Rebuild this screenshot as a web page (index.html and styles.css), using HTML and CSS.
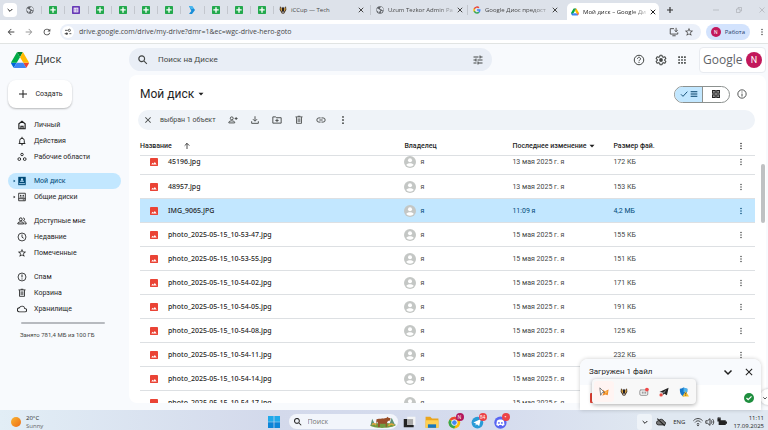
FILE: index.html
```html
<!DOCTYPE html>
<html lang="ru">
<head>
<meta charset="utf-8">
<title>Мой диск – Google Диск</title>
<link rel="stylesheet" href="styles.css">
</head>
<body>
<svg class="sprite" aria-hidden="true">
  <symbol id="close" viewBox="0 0 24 24"><path d="M19 6.4 17.6 5 12 10.6 6.4 5 5 6.4 10.6 12 5 17.6 6.4 19 12 13.4 17.6 19 19 17.6 13.4 12z"/></symbol>
  <symbol id="close-bold" viewBox="0 0 24 24"><path d="M3 3 21 21M21 3 3 21" fill="none" stroke="currentColor" stroke-width="4"/></symbol>
  <symbol id="chevron" viewBox="0 0 24 24"><path d="M5 9l7 7 7-7" fill="none" stroke="currentColor" stroke-width="3"/></symbol>
  <symbol id="globe" viewBox="0 0 24 24"><circle cx="12" cy="12" r="11" fill="#5f6368"/><path d="M3 8c4-1 5 3 8 3s2 4 0 5-1 5-3 5c-1-3-1-4-3-5s-3-3-3-6zM14 3c0 3-3 3-2 5s4 0 5 3 4 2 5 0-2-6-5-8zM17 15c-2 0-3 2-3 4l3 1 3-4z" fill="#dfe3ea"/></symbol>
  <symbol id="sheet" viewBox="0 0 24 24"><rect x="0" y="0" width="24" height="24" rx="2" fill="#23a94d"/><path d="M12 4v16M4 11.500h16" stroke="#fff" stroke-width="4"/></symbol>
  <symbol id="form" viewBox="0 0 24 24"><rect width="24" height="24" rx="2" fill="#673ab7"/><path d="M5 5h14v14H5z" fill="#fff"/><path d="M7 9h2m1.500 0H17M7 12h2m1.500 0H17M7 15.500h2m1.500 0H17" stroke="#673ab7" stroke-width="1.800"/></symbol>
  <symbol id="arrowmark" viewBox="0 0 24 24"><path d="M3 0h9l9 12-9 12H3l7-9z" fill="#188ed8"/><path d="M3 0h9l6 8-9 2z" fill="#49b8ef"/></symbol>
  <symbol id="beetle" viewBox="0 0 24 24"><path d="M3 1l6 6-4 2 7 14 7-14-4-2 6-6 1 10-7 12h-6L2 11z" fill="#44301e"/><path d="M4 4l5 4 1 9-5-5zM20 4l-5 4-1 9 5-5z" fill="#d09a35"/><path d="M9 2l3 4 3-4v12l-3 6-3-6z" fill="#211d22"/></symbol>
  <symbol id="g" viewBox="0 0 24 24"><path d="M22.500 12.300c0-.8-.1-1.500-.2-2.300H12v4.300h5.900a5 5 0 0 1-2.200 3.300v2.800h3.600c2-2 3.200-4.800 3.200-8.100z" fill="#4285f4"/><path d="M12 23c3 0 5.500-1 7.300-2.700l-3.600-2.700c-1 .7-2.200 1-3.700 1-2.900 0-5.300-1.900-6.200-4.500H2.200v2.800A11 11 0 0 0 12 23z" fill="#34a853"/><path d="M5.800 14.100a6.600 6.600 0 0 1 0-4.200V7.100H2.200a11 11 0 0 0 0 9.800z" fill="#fbbc05"/><path d="M12 5.400c1.600 0 3.100.6 4.200 1.600l3.200-3.100A11 11 0 0 0 2.200 7.100l3.600 2.800C6.700 7.300 9.100 5.400 12 5.400z" fill="#ea4335"/></symbol>
  <symbol id="drive" viewBox="0 0 87.300 78"><path d="m6.600 66.850 3.850 6.650c.8 1.400 1.950 2.500 3.300 3.300l13.750-23.800h-27.500c0 1.550.4 3.100 1.200 4.500z" fill="#0066da"/><path d="m43.650 25-13.750-23.800c-1.350.8-2.500 1.900-3.300 3.300l-25.400 44a9 9 0 0 0-1.200 4.500h27.500z" fill="#00ac47"/><path d="m73.550 76.800c1.350-.8 2.500-1.900 3.300-3.300l1.600-2.750 7.650-13.250c.8-1.400 1.200-2.950 1.200-4.500h-27.500l5.850 11.500z" fill="#ea4335"/><path d="m43.650 25 13.750-23.800c-1.350-.8-2.900-1.200-4.500-1.200h-18.500c-1.600 0-3.150.45-4.500 1.200z" fill="#00832d"/><path d="m59.800 53h-32.300l-13.750 23.800c1.350.8 2.900 1.200 4.500 1.200h50.800c1.600 0 3.150-.45 4.500-1.200z" fill="#3f86f4"/><path d="m73.400 26.500-12.700-22c-.8-1.400-1.950-2.500-3.300-3.300l-13.750 23.800 16.150 28h27.450c0-1.550-.4-3.100-1.200-4.500z" fill="#ffba00"/></symbol>
  <symbol id="back" viewBox="0 0 24 24"><path d="M20 11H7.800l5.600-5.600L12 4l-8 8 8 8 1.400-1.400L7.800 13H20z"/></symbol>
  <symbol id="reload" viewBox="0 0 24 24"><path d="M17.600 6.400A8 8 0 1 0 19.700 14h-2.100A6 6 0 1 1 12 6c1.700 0 3.100.7 4.200 1.800L13 11h7V4z"/></symbol>
  <symbol id="site" viewBox="0 0 24 24"><path d="M3 7h8M16 17h6M12 17H2" fill="none" stroke="currentColor" stroke-width="2.600"/><circle cx="16" cy="7" r="3.300" fill="none" stroke="currentColor" stroke-width="2.600"/><circle cx="8" cy="17" r="3.300" fill="currentColor"/></symbol>
  <symbol id="install" viewBox="0 0 24 24"><path d="M12 4H3v13h18v-4M8 21h8M17 2v9m-4-3.500 4 4 4-4" fill="none" stroke="currentColor" stroke-width="2.200"/></symbol>
  <symbol id="star" viewBox="0 0 24 24"><path d="m22 9.240-7.190-.62L12 2 9.190 8.630 2 9.240l5.460 4.730L5.820 21 12 17.270 18.180 21l-1.630-7.030zM12 15.400l-3.760 2.270 1-4.280-3.320-2.880 4.380-.38L12 6.100l1.710 4.040 4.380.38-3.320 2.880 1 4.280z"/></symbol>
  <symbol id="dots" viewBox="0 0 24 24"><circle cx="12" cy="4.500" r="2.200"/><circle cx="12" cy="12" r="2.200"/><circle cx="12" cy="19.500" r="2.200"/></symbol>
  <symbol id="plus" viewBox="0 0 24 24"><path d="M20 13h-7v7h-2v-7H4v-2h7V4h2v7h7z"/></symbol>
  <symbol id="search" viewBox="0 0 24 24"><path d="M20.500 19 15 13.500a7 7 0 1 0-1.500 1.500l5.500 5.500zM9.500 14a4.600 4.600 0 1 1 0-9.200 4.600 4.600 0 0 1 0 9.200z"/></symbol>
  <symbol id="tune" viewBox="0 0 24 24"><path d="M3 17v2h6v-2zM3 5v2h10V5zm10 16v-2h8v-2h-8v-2h-2v6zM7 9v2H3v2h4v2h2V9zm14 4v-2H11v2zm-6-4h2V7h4V5h-4V3h-2z"/></symbol>
  <symbol id="help" viewBox="0 0 24 24"><circle cx="12" cy="12" r="9.500" fill="none" stroke="currentColor" stroke-width="2"/><path d="M9 9.500a3 3 0 1 1 4.500 2.600c-1 .6-1.500 1.100-1.500 2.400" fill="none" stroke="currentColor" stroke-width="2"/><path d="M11 16h2v2h-2z"/></symbol>
  <symbol id="gear" viewBox="0 0 24 24"><path d="M10 2.500h4l.6 3 2.200 1.200 2.900-1 2 3.500-2.300 2v1.600l2.300 2-2 3.500-2.900-1-2.200 1.200-.6 3h-4l-.6-3-2.200-1.200-2.900 1-2-3.500 2.300-2v-1.600l-2.300-2 2-3.500 2.900 1 2.200-1.200z" fill="none" stroke="currentColor" stroke-width="2.200" stroke-linejoin="round"/><circle cx="12" cy="12" r="3.800"/></symbol>
  <symbol id="apps" viewBox="0 0 24 24"><path d="M3 3h4v4H3zm7 0h4v4h-4zm7 0h4v4h-4zM3 10h4v4H3zm7 0h4v4h-4zm7 0h4v4h-4zM3 17h4v4H3zm7 0h4v4h-4zm7 0h4v4h-4z"/></symbol>
  <symbol id="home" viewBox="0 0 24 24"><path d="M12 3 4.500 9v12h15V9zM9.500 21v-6h5v6" fill="none" stroke="currentColor" stroke-width="2.800"/></symbol>
  <symbol id="bell" viewBox="0 0 24 24"><path d="M4 18h16M6.500 18v-7a5.500 5.500 0 0 1 11 0v7M12 2v4M10 21h4" fill="none" stroke="currentColor" stroke-width="2.300"/></symbol>
  <symbol id="spaces" viewBox="0 0 24 24"><g fill="none" stroke="currentColor" stroke-width="2.200"><circle cx="12" cy="6" r="3"/><circle cx="5.500" cy="17" r="3.300"/><circle cx="18.500" cy="17" r="3.300"/></g></symbol>
  <symbol id="mydrive" viewBox="0 0 24 24"><path d="M3 2h18v20H3z"/><path d="M5 17.500h14v2H5z" fill="#c2e7ff"/><circle cx="12" cy="8" r="2.500" fill="#c2e7ff"/><path d="M7 14a5 4 0 0 1 10 0z" fill="#c2e7ff"/></symbol>
  <symbol id="shareddrive" viewBox="0 0 24 24"><path d="M4 3h16v18H4zM4 16h16" fill="none" stroke="currentColor" stroke-width="2"/><circle cx="9" cy="8.500" r="1.700"/><circle cx="15" cy="8.500" r="1.700"/><path d="M6 13a3 2.500 0 0 1 6 0 3 2.500 0 0 1 6 0zM14 18h4v1.500h-4z"/></symbol>
  <symbol id="people" viewBox="0 0 24 24"><g fill="none" stroke="currentColor" stroke-width="2.300"><circle cx="9" cy="8" r="3.500"/><path d="M2 19v-2c0-4 14-4 14 0v2zM15 4.500c4 0 4 7 0 7M17 14c3 0 5 1 5 3v2h-4"/></g></symbol>
  <symbol id="clock" viewBox="0 0 24 24"><path d="M12 6v6.500l4 2.500" fill="none" stroke="currentColor" stroke-width="2"/><circle cx="12" cy="12" r="9.500" fill="none" stroke="currentColor" stroke-width="2"/></symbol>
  <symbol id="spam" viewBox="0 0 24 24"><path d="M12 6v7M12 15.500v2.500" fill="none" stroke="currentColor" stroke-width="2.300"/><circle cx="12" cy="12" r="9.500" fill="none" stroke="currentColor" stroke-width="2"/></symbol>
  <symbol id="info" viewBox="0 0 24 24"><path d="M12 11v7M12 6v2.500" fill="none" stroke="currentColor" stroke-width="2.300"/><circle cx="12" cy="12" r="10" fill="none" stroke="currentColor" stroke-width="2.200"/></symbol>
  <symbol id="trash" viewBox="0 0 24 24"><path d="M3.500 4.500h17M9 3h6M6 5v15h12V5M10 8v9M14 8v9" fill="none" stroke="currentColor" stroke-width="2"/></symbol>
  <symbol id="cloud" viewBox="0 0 24 24"><path d="M19.400 10A7.500 7.500 0 0 0 5.400 8 6 6 0 0 0 6 20h13a5 5 0 0 0 .4-10zM19 18H6a4 4 0 0 1 0-8h.7a5.500 5.500 0 0 1 10.800 2H19a3 3 0 0 1 0 6z"/></symbol>
  <symbol id="adduser" viewBox="0 0 24 24"><g fill="none" stroke="currentColor" stroke-width="2.200"><circle cx="9" cy="8" r="3.500"/><path d="M2 19v-2c0-4 14-4 14 0v2zM19.500 5v7M16 8.500h7"/></g></symbol>
  <symbol id="download" viewBox="0 0 24 24"><path d="M12 3v11M7 10l5 5 5-5M4 15v5h16v-5" fill="none" stroke="currentColor" stroke-width="2.200"/></symbol>
  <symbol id="move" viewBox="0 0 24 24"><path d="M2 4.500h7l2 2h11v13H2zM8 13h8M12 9v8" fill="none" stroke="currentColor" stroke-width="2.200"/></symbol>
  <symbol id="link" viewBox="0 0 24 24"><path d="M11 7H7a5 5 0 0 0 0 10h4M13 7h4a5 5 0 0 1 0 10h-4M8 12h8" fill="none" stroke="currentColor" stroke-width="2.200"/></symbol>
  <symbol id="up" viewBox="0 0 24 24"><path d="M12 21V4M5 11l7-7 7 7" fill="none" stroke="currentColor" stroke-width="2.400"/></symbol>
  <symbol id="caret" viewBox="0 0 24 24"><path d="M2 7h20L12 18z"/></symbol>
  <symbol id="triangle" viewBox="0 0 24 24"><path d="M5 2v20l14-10z"/></symbol>
  <symbol id="check" viewBox="0 0 24 24"><path d="M3 13l6 6L22 5" fill="none" stroke="currentColor" stroke-width="2.600"/></symbol>
  <symbol id="list" viewBox="0 0 24 24"><path d="M2 5h20M2 12h20M2 19h20" stroke="currentColor" stroke-width="3.200"/></symbol>
  <symbol id="grid" viewBox="0 0 24 24"><path d="M4 4h6v6H4zm10 0h6v6h-6zM4 14h6v6H4zm10 0h6v6h-6z" fill="none" stroke="currentColor" stroke-width="3"/></symbol>
  <symbol id="image" viewBox="0 0 24 24"><rect width="24" height="24" rx="2.500" fill="#ea4335"/><path d="M4 19.500l3.500-5 3 3 4-5.500 5.500 7.500z" fill="#fff"/></symbol>
  <symbol id="person" viewBox="0 0 24 24"><circle cx="12" cy="12" r="12" fill="#c4c7c5"/><circle cx="12" cy="8.700" r="4" fill="#fff"/><path d="M4.500 18c2-5 13-5 15 0a9.500 9.500 0 0 1-15 0z" fill="#fff"/></symbol>
</svg>

<header class="browser">
  <div class="tabs">
    <button class="tab-search" aria-label="Поиск вкладок"><svg class="i8"><use href="#chevron"/></svg></button>
    <div class="pinned">
      <span><svg class="i8"><use href="#globe"/></svg></span>
      <span><svg class="i8"><use href="#sheet"/></svg></span>
      <span><svg class="i8"><use href="#form"/></svg></span>
      <span><svg class="i8"><use href="#sheet"/></svg></span>
      <span><svg class="i8"><use href="#sheet"/></svg></span>
      <span><svg class="i8"><use href="#sheet"/></svg></span>
      <span><svg class="i8"><use href="#sheet"/></svg></span>
      <span><svg class="i8"><use href="#arrowmark"/></svg></span>
      <span><svg class="i8"><use href="#sheet"/></svg></span>
      <span><svg class="i8"><use href="#sheet"/></svg></span>
      <span><svg class="i8"><use href="#sheet"/></svg></span>
    </div>
    <div class="tab"><svg class="i8"><use href="#beetle"/></svg><span>iCCup — Tech</span><button aria-label="Закрыть"><svg class="i6"><use href="#close-bold"/></svg></button></div>
    <div class="tab"><svg class="i8"><use href="#globe"/></svg><span class="fade">Uzum Tezkor Admin Pa</span><button aria-label="Закрыть"><svg class="i6"><use href="#close-bold"/></svg></button></div>
    <div class="tab last"><svg class="i8"><use href="#g"/></svg><span class="fade">Google Диос предост</span><button aria-label="Закрыть"><svg class="i6"><use href="#close-bold"/></svg></button></div>
    <div class="tab active"><svg class="i8"><use href="#drive"/></svg><span class="fade">Мой диск – Google Ди</span><button aria-label="Закрыть"><svg class="i6"><use href="#close-bold"/></svg></button></div>
    <button class="new-tab" aria-label="Новая вкладка"><svg class="i8" viewBox="0 0 24 24"><path d="M12 3v18M3 12h18" stroke="#333" stroke-width="3.500"/></svg></button>
    <div class="window-controls">
      <svg class="i6" viewBox="0 0 12 12"><path d="M0 6h12"/></svg>
      <svg class="i6" viewBox="0 0 12 12"><path d="M1 4h7v7H1zM4 4V1h7v7H8"/></svg>
      <svg class="i6" viewBox="0 0 12 12"><path d="M1 1l10 10M11 1 1 11"/></svg>
    </div>
  </div>
  <div class="address-row">
    <button aria-label="Назад"><svg class="i10"><use href="#back"/></svg></button>
    <button class="forward" aria-label="Вперёд"><svg class="i10"><use href="#back"/></svg></button>
    <button aria-label="Обновить"><svg class="i10"><use href="#reload"/></svg></button>
    <div class="address">
      <span class="site-info"><svg class="i8"><use href="#site"/></svg></span>
      <input type="text" aria-label="Адрес" value="drive.google.com/drive/my-drive?dmr=1&amp;ec=wgc-drive-hero-goto">
      <svg class="i10"><use href="#install"/></svg>
      <svg class="i10"><use href="#star"/></svg>
    </div>
    <button class="profile"><span class="avatar small">N</span>Работа</button>
    <button aria-label="Меню"><svg class="i8"><use href="#dots"/></svg></button>
  </div>
</header>

<div class="drive">
  <header class="top">
    <a class="brand" href="#"><svg><use href="#drive"/></svg>Диск</a>
    <label class="search"><svg class="i12"><use href="#search"/></svg><input type="text" placeholder="Поиск на Диске"><svg class="i12"><use href="#tune"/></svg></label>
    <div class="top-actions">
      <button aria-label="Справка"><svg class="i12"><use href="#help"/></svg></button>
      <button aria-label="Настройки"><svg class="i12"><use href="#gear"/></svg></button>
      <button aria-label="Приложения"><svg class="i10"><use href="#apps"/></svg></button>
      <div class="account"><span>Google</span><span class="avatar">N</span></div>
    </div>
  </header>

  <nav class="sidebar">
    <button class="create"><svg class="i12"><use href="#plus"/></svg>Создать</button>
    <ul>
      <li><a href="#"><span class="arrow"></span><svg class="i10"><use href="#home"/></svg>Личный</a></li>
      <li><a href="#"><span class="arrow"></span><svg class="i10"><use href="#bell"/></svg>Действия</a></li>
      <li><a href="#"><span class="arrow"></span><svg class="i10"><use href="#spaces"/></svg>Рабочие области</a></li>
    </ul>
    <ul>
      <li><a class="current" href="#"><span class="arrow"><svg><use href="#triangle"/></svg></span><svg class="i10"><use href="#mydrive"/></svg>Мой диск</a></li>
      <li><a href="#"><span class="arrow"><svg><use href="#triangle"/></svg></span><svg class="i10"><use href="#shareddrive"/></svg>Общие диски</a></li>
    </ul>
    <ul>
      <li><a href="#"><span class="arrow"></span><svg class="i10"><use href="#people"/></svg>Доступные мне</a></li>
      <li><a href="#"><span class="arrow"></span><svg class="i10"><use href="#clock"/></svg>Недавние</a></li>
      <li><a href="#"><span class="arrow"></span><svg class="i10"><use href="#star"/></svg>Помеченные</a></li>
    </ul>
    <ul>
      <li><a href="#"><span class="arrow"></span><svg class="i10"><use href="#spam"/></svg>Спам</a></li>
      <li><a href="#"><span class="arrow"></span><svg class="i10"><use href="#trash"/></svg>Корзина</a></li>
      <li><a href="#"><span class="arrow"></span><svg class="i10"><use href="#cloud"/></svg>Хранилище</a></li>
    </ul>
    <div class="quota"></div>
    <p>Занято 781,4 МБ из 100 ГБ</p>
  </nav>

  <main>
    <div class="title-row">
      <h1>Мой диск<svg class="i6"><use href="#caret"/></svg></h1>
      <div class="view-switch">
        <button class="on" aria-label="Список"><svg class="i8"><use href="#check"/></svg><svg class="i8"><use href="#list"/></svg></button>
        <button aria-label="Сетка"><svg class="i10"><use href="#grid"/></svg></button>
      </div>
      <button aria-label="Сведения"><svg class="i10"><use href="#info"/></svg></button>
    </div>
    <div class="selection">
      <button aria-label="Снять выделение"><svg class="i10"><use href="#close"/></svg></button>
      <span>выбран 1 объект</span>
      <button aria-label="Поделиться"><svg class="i10"><use href="#adduser"/></svg></button>
      <button aria-label="Скачать"><svg class="i10"><use href="#download"/></svg></button>
      <button aria-label="Переместить"><svg class="i10"><use href="#move"/></svg></button>
      <button aria-label="Удалить"><svg class="i10"><use href="#trash"/></svg></button>
      <button aria-label="Ссылка"><svg class="i10"><use href="#link"/></svg></button>
      <button aria-label="Ещё"><svg class="i10"><use href="#dots"/></svg></button>
    </div>
    <table>
      <thead><tr><th class="name">Название<svg class="i8"><use href="#up"/></svg></th><th class="owner">Владелец</th><th class="date">Последнее изменение<svg class="i6"><use href="#caret"/></svg></th><th>Размер фай.</th><th class="more"><svg class="i8"><use href="#dots"/></svg></th></tr></thead>
      <tbody>
        <tr class="scrolled"><td><svg><use href="#image"/></svg>45196.jpg</td><td><svg><use href="#person"/></svg>я</td><td>13 мая 2025 г. я</td><td>172 КБ</td><td><svg><use href="#dots"/></svg></td></tr>
        <tr><td><svg><use href="#image"/></svg>48957.jpg</td><td><svg><use href="#person"/></svg>я</td><td>13 мая 2025 г. я</td><td>153 КБ</td><td><svg><use href="#dots"/></svg></td></tr>
        <tr class="selected"><td><svg><use href="#image"/></svg>IMG_9065.JPG</td><td><svg><use href="#person"/></svg>я</td><td>11:09 я</td><td>4,2 МБ</td><td><svg><use href="#dots"/></svg></td></tr>
        <tr><td><svg><use href="#image"/></svg>photo_2025-05-15_10-53-47.jpg</td><td><svg><use href="#person"/></svg>я</td><td>15 мая 2025 г. я</td><td>155 КБ</td><td><svg><use href="#dots"/></svg></td></tr>
        <tr><td><svg><use href="#image"/></svg>photo_2025-05-15_10-53-55.jpg</td><td><svg><use href="#person"/></svg>я</td><td>15 мая 2025 г. я</td><td>151 КБ</td><td><svg><use href="#dots"/></svg></td></tr>
        <tr><td><svg><use href="#image"/></svg>photo_2025-05-15_10-54-02.jpg</td><td><svg><use href="#person"/></svg>я</td><td>15 мая 2025 г. я</td><td>171 КБ</td><td><svg><use href="#dots"/></svg></td></tr>
        <tr><td><svg><use href="#image"/></svg>photo_2025-05-15_10-54-05.jpg</td><td><svg><use href="#person"/></svg>я</td><td>15 мая 2025 г. я</td><td>191 КБ</td><td><svg><use href="#dots"/></svg></td></tr>
        <tr><td><svg><use href="#image"/></svg>photo_2025-05-15_10-54-08.jpg</td><td><svg><use href="#person"/></svg>я</td><td>15 мая 2025 г. я</td><td>125 КБ</td><td><svg><use href="#dots"/></svg></td></tr>
        <tr><td><svg><use href="#image"/></svg>photo_2025-05-15_10-54-11.jpg</td><td><svg><use href="#person"/></svg>я</td><td>15 мая 2025 г. я</td><td>232 КБ</td><td><svg><use href="#dots"/></svg></td></tr>
        <tr><td><svg><use href="#image"/></svg>photo_2025-05-15_10-54-14.jpg</td><td><svg><use href="#person"/></svg>я</td><td>15 мая 2025 г. я</td><td></td><td></td></tr>
        <tr><td><svg><use href="#image"/></svg>photo_2025-05-15_10-54-17.jpg</td><td><svg><use href="#person"/></svg>я</td><td>15 мая 2025 г. я</td><td></td><td></td></tr>
      </tbody>
    </table>
    <div class="scrollbar"></div>
  </main>

  <div class="side-toggle"><svg class="i6"><use href="#chevron"/></svg></div>
  <section class="toast">
    <header><h2>Загружен 1 файл</h2><button aria-label="Свернуть"><svg class="i12"><use href="#chevron"/></svg></button><button aria-label="Закрыть"><svg class="i12"><use href="#close"/></svg></button></header>
    <div class="upload"><svg class="i10"><use href="#image"/></svg><svg class="i10" viewBox="0 0 24 24"><circle cx="12" cy="12" r="12" fill="#1e8e3e"/><path d="M6 12l4 4 8-8" fill="none" stroke="#fff" stroke-width="3"/></svg></div>
  </section>
</div>

<div class="tray-popup">
  <span class="hover"><svg class="i10" viewBox="0 0 24 24"><path d="M9 6l5 4 9-4-2 14-6-2-7 3 3-8z" fill="#f08a24"/><path d="M14 10l7 1-5 6z" fill="#ffc05c"/><path d="M2 2l11 11H8l-4 7z" fill="#fff" stroke="#444" stroke-width="1.500"/></svg></span>
  <span><svg class="i8"><use href="#beetle"/></svg></span>
  <span><svg class="i10" viewBox="0 0 24 24"><path d="M4 7h14a3 3 0 0 1 3 3v7a3 3 0 0 1-3 3H5a3 3 0 0 1-3-3v-7a3 3 0 0 1 3-3z" fill="#f4f4f4" stroke="#777" stroke-width="1.800"/><path d="M8 11v5M12 11v5M16 11v5" stroke="#777" stroke-width="2"/><circle cx="19" cy="6" r="4.500" fill="#f04848"/></svg></span>
  <span><svg class="i10" viewBox="0 0 24 24"><path d="M1 12 23 2l-4 18-6-4-4 3 0-6z" fill="#222"/><path d="M9 13l9-7-6 10z" fill="#777"/><circle cx="5" cy="19" r="4" fill="#e84b43"/></svg></span>
  <span><svg class="i10" viewBox="0 0 24 24"><path d="M2 4c5 0 7-2 9-3 2 1 4 3 9 3 0 10-2 15-9 19C4 19 2 14 2 4z" fill="#1777c8"/><path d="M11 1c2 1 4 3 9 3v8h-9z" fill="#4db4ee"/><path d="M16 10l8 13H8z" fill="#fbc02d"/><path d="M16 14v4m0 1.500V21" stroke="#333" stroke-width="1.800"/></svg></span>
</div>

<footer class="taskbar">
  <div class="weather"><span class="sun"></span><div>20°C<br><small>Sunny</small></div></div>
  <div class="apps">
    <button aria-label="Пуск"><svg class="i12" viewBox="0 0 24 24"><path d="M0 0h11.300v11.300H0zM12.700 0H24v11.300H12.700z" fill="#20a9ea"/><path d="M0 12.700h11.300V24H0zM12.700 12.700H24V24H12.700z" fill="#0c85d8"/></svg></button>
    <label class="task-search"><svg class="i10"><use href="#search"/></svg><input type="text" placeholder="Поиск">
      <svg class="scene" viewBox="0 0 48 24"><path d="M0 19c8-5 35-6 48-1-5 7-42 8-48 1z" fill="#719a3f"/><path d="M1 19l3-12 5 10M36 17l4-12 6 13" fill="#5d9275"/><path d="M12 8c5-2 16-1 19-3l1-2 2 2 4 1-1 4-4 1-2 4v7h-2v-6H18v6h-3v-7l-2-3-2 6z" fill="#994e29"/><path d="M4 18c2-3 6-2 7 1M34 20c3-4 8-4 10-1" stroke="#dfa73a" stroke-width="3" fill="none"/></svg>
    </label>
    <button aria-label="Представление задач"><svg class="i14" viewBox="0 0 24 24"><path d="M9 3h14v14H9z" fill="#f3f4f5"/><path d="M3 7h6v10h11v4H3z" fill="#222"/><path d="M9 7h10v10H9z" fill="#aaa"/></svg></button>
    <button aria-label="Проводник"><svg class="i14" viewBox="0 0 24 24"><path d="M1 3h8l3 3h11v16H1z" fill="#eaa51d"/><path d="M1 9h22v13H1z" fill="#ffd052"/><path d="M5 16h14v6H5z" fill="#1878be"/></svg></button>
    <button aria-label="Chrome"><svg class="i14" viewBox="0 0 24 24"><circle cx="11" cy="13" r="10" fill="#fbbc05"/><path d="M2.300 8A10 10 0 0 1 20 9l-9 .5z" fill="#ea4335"/><path d="M2.300 8A10 10 0 0 0 10.500 23l4-8z" fill="#34a853"/><circle cx="11" cy="13" r="4.800" fill="#4285f4" stroke="#fff" stroke-width="1.500"/></svg><span class="badge plum">N</span></button>
    <button aria-label="Telegram"><svg class="i14" viewBox="0 0 24 24"><circle cx="11" cy="13" r="10" fill="#299bd7"/><path d="M4 13l13-6-3 12-4-3-2 2v-4z" fill="#fff"/></svg><span class="badge">84</span></button>
    <button aria-label="Discord"><svg class="i14" viewBox="0 0 24 24"><circle cx="11" cy="13" r="10.500" fill="#5865f2"/><path d="M5 10c3-3 9-3 12 0l1 7-4 2-1-2H9l-1 2-4-2z" fill="#fff"/><circle cx="8.500" cy="13.500" r="1.500" fill="#5865f2"/><circle cx="13.500" cy="13.500" r="1.500" fill="#5865f2"/></svg><span class="badge">•</span></button>
  </div>
  <div class="tray">
    <span class="tray-open"><svg class="i8"><use href="#chevron"/></svg></span>
    <svg class="i10" viewBox="0 0 24 24"><path d="M6 19a5 5 0 0 1 0-10 7 7 0 0 1 13 2 4 4 0 0 1 0 8z" fill="#777" stroke="#222" stroke-width="2"/><path d="M3 4l18 17" stroke="#222" stroke-width="2.500"/></svg>
    <span class="lang">ENG</span>
    <svg class="i10" viewBox="0 0 24 24"><path d="M1 9c6-7 16-7 22 0M5 13c4-5 10-5 14 0M9 17c2-2 4-2 6 0" fill="none" stroke="#222" stroke-width="2"/><circle cx="12" cy="20" r="2"/></svg>
    <svg class="i10" viewBox="0 0 24 24"><path d="M2 9h4l6-5v16l-6-5H2zM15 8c2 2 2 6 0 8M18 5c4 4 4 10 0 14" fill="none" stroke="#222" stroke-width="2"/></svg>
    <svg class="i10" viewBox="0 0 24 24"><path d="M4 8h17v11H4zM21 11h3v5h-3zM1 3h8v8H1z" fill="#222"/><path d="M3 0v4m4-4v4" stroke="#222" stroke-width="2"/></svg>
    <div class="clock">11:11<br>17.09.2025</div>
  </div>
</footer>
</body>
</html>
```
FILE: styles.css
```css
* { box-sizing: border-box; }
body {
  margin: 0;
  height: 100vh;
  display: flex;
  flex-direction: column;
  overflow: hidden;
  font: 7px/10px Roboto, "Noto Sans", sans-serif;
  color: #1f1f1f;
  background: #f8fafd;
}
button, input { font: inherit; color: inherit; border: 0; padding: 0; background: none; outline: 0; }
button { display: flex; align-items: center; justify-content: center; }
a { color: inherit; text-decoration: none; }
ul { list-style: none; margin: 0 0 8px; padding: 0; }
h1, h2, p { margin: 0; font-weight: 400; }
svg { fill: currentColor; flex: none; }
.sprite { position: absolute; width: 0; height: 0; }
.i6 { width: 6px; height: 6px; }
.i8 { width: 8px; height: 8px; }
.i10 { width: 10px; height: 10px; }
.i12 { width: 12px; height: 12px; }
.i14 { width: 14px; height: 14px; }

/* Browser frame */
.browser { font-family: "Open Sans", sans-serif; color: #474747; }
.tabs { display: flex; align-items: center; height: 20px; background: #dde2ea; padding-left: 3px; font-size: 6px; }
.tab-search { width: 14px; height: 14px; border-radius: 4px; background: #fff; color: #222; margin-right: 2px; }
.pinned { display: flex; width: 255px; }
.pinned span { flex: 1; display: flex; justify-content: center; border-right: 1px solid #c3c7ce; }
.tab { display: flex; align-items: center; gap: 4px; width: 97px; padding: 0 6px 0 5px; border-right: 1px solid #c3c7ce; }
.tab span { flex: 1; white-space: nowrap; }
.tab .fade { mask-image: linear-gradient(90deg, #000 75%, #0004); }
.tab.last { border-color: transparent; }
.tab.active { height: 17px; width: 92px; align-self: flex-end; padding: 0 4px; margin-left: 2px; background: #fff; border: 0; border-radius: 5px 5px 0 0; color: #222; }
.new-tab { margin-left: 7px; }
.window-controls { display: flex; gap: 17px; margin-left: auto; padding-right: 3px; }
.window-controls svg { fill: none; stroke: #9a9da2; }
.address-row { display: flex; align-items: center; gap: 8px; height: 24px; padding: 0 2px 0 6px; background: #fff; border-bottom: 1px solid #e1e4e3; }
.forward { color: #999; transform: scaleX(-1); }
.address { flex: 1; display: flex; align-items: center; gap: 5px; height: 16px; padding: 0 7px 0 2px; border-radius: 8px; background: #ebf0f9; }
.address input { flex: 1; min-width: 0; }
.site-info { display: flex; align-items: center; justify-content: center; width: 12px; height: 12px; border-radius: 50%; background: #fff; }
.profile { height: 16px; gap: 4px; padding: 0 5px; margin-left: -3px; border-radius: 8px; background: #d3e3fd; color: #27406b; font-size: 6px; }
.avatar { display: flex; align-items: center; justify-content: center; width: 16px; height: 16px; border-radius: 50%; background: #c2185b; color: #fff; font: 9px/16px Roboto, sans-serif; }
.avatar.small { width: 10px; height: 10px; font-size: 5px; }

/* Drive application */
.drive {
  position: relative;
  flex: 1;
  min-height: 0;
  display: grid;
  grid-template: 31px minmax(0, 1fr) / 129px minmax(0, 1fr);
  padding: 0 2px 7px 0;
}
.top { grid-column: 1 / 3; display: flex; align-items: center; }
.brand { display: flex; align-items: center; gap: 6px; width: 129px; padding-left: 11px; font-size: 11px; color: #444746; }
.brand svg { width: 18px; height: 16px; }
.search { display: flex; align-items: center; gap: 9px; width: 363px; height: 23px; padding: 0 8px; border-radius: 12px; background: #e9eef6; font-size: 8px; color: #444746; }
.search input { flex: 1; min-width: 0; }
.search input::placeholder { color: #444746; opacity: 1; }
.top-actions { display: flex; align-items: center; gap: 10px; margin-left: auto; color: #444746; }
.account { display: flex; align-items: center; justify-content: space-between; width: 67px; height: 26px; padding: 0 3px; margin-left: 2px; border: 1px solid #e8ebf0; border-radius: 4px; background: #fff; font: 12px/16px "Open Sans", sans-serif; color: #5f6368; }

.sidebar { padding: 5px 8px; }
.create { width: 64px; height: 28px; gap: 6px; margin-bottom: 9px; border-radius: 8px; background: #fff; box-shadow: 0 1px 2px #0004; }
.sidebar a { display: flex; align-items: center; height: 16px; padding-left: 5px; border-radius: 8px; }
.arrow { display: flex; width: 4px; }
.arrow svg { width: 3px; height: 4px; }
.sidebar a .i10 { margin-right: 7px; }
.sidebar a.current { background: #c2e7ff; color: #004a77; }
.quota { height: 2px; margin: -3px 16px 6px 13px; background: #b7babf; border-radius: 1px; }
.sidebar p { padding-left: 12px; font-size: 6px; color: #444746; }

main { position: relative; padding: 9px 11px 0; background: #fff; border-radius: 8px; overflow: hidden; }
.title-row { display: flex; align-items: center; gap: 7px; height: 20px; padding-right: 8px; color: #444746; }
.title-row h1 { display: flex; align-items: center; gap: 4px; margin-right: auto; font-size: 12px; line-height: 20px; color: #1f1f1f; }
.view-switch { display: flex; height: 17px; border: 1px solid #8c918f; border-radius: 9px; overflow: hidden; color: #1f1f1f; }
.view-switch button { width: 26px; gap: 2px; }
.view-switch .on { width: 28px; background: #c2e7ff; color: #003f67; border-right: 1px solid #8c918f; }
.selection { display: flex; align-items: center; gap: 12px; height: 20px; margin: 6px 0 0 -2px; padding-left: 5px; border-radius: 10px; background: #eff3f8; color: #444746; }
.selection span { margin-left: -5px; }

table { width: 100%; table-layout: fixed; border-collapse: separate; border-spacing: 0; margin-top: 6px; }
th { height: 20px; padding: 0; text-align: left; font-weight: 500; border-bottom: 1px solid #dde0e3; }
.name { width: 43%; }
.owner { width: 108px; }
.date { width: 101px; }
.more { width: 28px; }
th svg, td svg { vertical-align: middle; }
.name svg { margin-left: 11px; }
.date svg { margin-left: 3px; }
td { height: 24px; padding: 0; white-space: nowrap; border-bottom: 1px solid #dde0e3; color: #444746; }
td:first-child { padding-left: 10px; color: #1f1f1f; font-family: "Noto Sans", sans-serif; font-weight: 500; }
td:first-child svg { width: 8px; height: 8px; margin-right: 10px; }
td:nth-child(2) svg { width: 12px; height: 12px; margin-right: 4px; }
th:last-child, td:last-child { text-align: center; }
td:last-child svg { width: 8px; height: 8px; }
.scrolled td { height: 18px; padding-bottom: 6px; }
.selected td { background: #c2e7ff; color: #004a77; }
.selected td:first-child { color: #1f1f1f; }
.scrollbar { position: absolute; right: 1px; top: 89px; width: 4px; height: 59px; border-radius: 2px; background: #bfc1c3; }

.side-toggle { position: absolute; right: -8px; bottom: 5px; width: 16px; height: 16px; padding: 5px 2px; border-radius: 50%; background: #fff; box-shadow: 0 0 3px #0004; overflow: hidden; }
.toast { position: absolute; right: 7px; bottom: 0; width: 181px; border-radius: 8px 8px 0 0; background: #fff; box-shadow: 0 0 4px #0003; }
.toast header { display: flex; align-items: center; gap: 9px; height: 26px; padding: 0 6px 0 9px; border-radius: 8px 8px 0 0; background: #f8fafd; }
.toast h2 { flex: 1; font-size: 8px; }
.upload { display: flex; align-items: center; justify-content: space-between; height: 25px; padding: 0 7px 0 10px; }
.tray-popup { position: absolute; right: 72px; bottom: 26px; display: flex; height: 25px; padding: 2px; border-radius: 4px; background: #f8f8f8; box-shadow: 0 1px 4px #0005; }
.tray-popup span { display: flex; align-items: center; justify-content: center; width: 20px; border-radius: 3px; }
.tray-popup .hover { background: #fff4f2; }

/* Desktop taskbar */
.taskbar { display: grid; grid-template-columns: 1fr auto 1fr; align-items: center; height: 20px; padding: 3px 4px 0 11px; font: 6px/8px "Open Sans", sans-serif; background: linear-gradient(90deg, #e2eef6, #d3d9eb 35%, #d5dcee 65%, #e0e8f1 85%); }
.weather { display: flex; align-items: center; gap: 5px; }
.weather small { font-size: 6px; color: #666; }
.sun { width: 10px; height: 10px; border-radius: 50%; background: linear-gradient(135deg, #f9b532, #ee6d16); }
.apps { display: flex; align-items: center; gap: 9px; }
.apps button { position: relative; }
.task-search { display: flex; align-items: center; gap: 5px; width: 109px; height: 15px; padding: 0 2px 0 4px; margin-right: -5px; border-radius: 8px; background: #f2f5fb; font-size: 7px; }
.task-search input { flex: 1; min-width: 0; }
.scene { width: 26px; height: 13px; }
.badge { position: absolute; right: -2px; top: -2px; width: 8px; height: 8px; border-radius: 50%; background: #ec4248; color: #fff; font-size: 5px; line-height: 8px; text-align: center; }
.badge.plum { background: #b3175e; }
.tray { display: flex; align-items: center; justify-content: flex-end; gap: 2px; }
.tray-open { display: flex; align-items: center; justify-content: center; width: 15px; height: 16px; border-radius: 3px; background: #eef3f8; margin-right: 2px; }
.lang { margin: 0 6px 0 5px; }
.clock { margin-left: 4px; text-align: right; }
```
